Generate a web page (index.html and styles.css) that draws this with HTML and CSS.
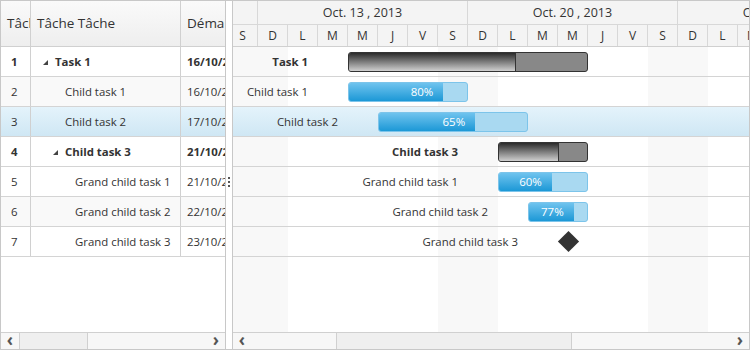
FILE: index.html
```html
<!DOCTYPE html>
<html>
  <head>
    <title>Gantt</title>
    <link rel="stylesheet" href="styles.css">
  </head>
  <body>
    <div class="gantt">
      <div class="grid">
        <div class="grid-head">
          <div class="cell c-id">Tâche ID</div>
          <div class="cell c-name">Tâche Tâche</div>
          <div class="cell c-start">Démarrer</div>
        </div>
        <div class="grid-body">
          <div class="grid-row parent">
            <div class="cell c-id">1</div>
            <div class="cell c-name lvl0"><span class="toggle"></span>Task 1</div>
            <div class="cell c-start">16/10/2013</div>
          </div>
          <div class="grid-row alt">
            <div class="cell c-id">2</div>
            <div class="cell c-name lvl1">Child task 1</div>
            <div class="cell c-start">16/10/2013</div>
          </div>
          <div class="grid-row selected">
            <div class="cell c-id">3</div>
            <div class="cell c-name lvl1">Child task 2</div>
            <div class="cell c-start">17/10/2013</div>
          </div>
          <div class="grid-row parent">
            <div class="cell c-id">4</div>
            <div class="cell c-name lvl1"><span class="toggle"></span>Child task 3</div>
            <div class="cell c-start">21/10/2013</div>
          </div>
          <div class="grid-row">
            <div class="cell c-id">5</div>
            <div class="cell c-name lvl2">Grand child task 1</div>
            <div class="cell c-start">21/10/2013</div>
          </div>
          <div class="grid-row alt">
            <div class="cell c-id">6</div>
            <div class="cell c-name lvl2">Grand child task 2</div>
            <div class="cell c-start">22/10/2013</div>
          </div>
          <div class="grid-row">
            <div class="cell c-id">7</div>
            <div class="cell c-name lvl2">Grand child task 3</div>
            <div class="cell c-start">23/10/2013</div>
          </div>
        </div>
        <div class="hscroll">
          <span class="arrow">&lsaquo;</span>
          <span class="thumb left-thumb"></span>
          <span class="track"></span>
          <span class="arrow">&rsaquo;</span>
        </div>
      </div>

      <div class="splitter">
        <div class="grip"><i></i><i></i><i></i></div>
      </div>

      <div class="chart">
        <div class="chart-head">
          <div class="months">
            <div class="month first"></div>
            <div class="month">Oct. 13 , 2013</div>
            <div class="month">Oct. 20 , 2013</div>
            <div class="month">Oct. 27 , 2013</div>
          </div>
          <div class="days">
            <div class="day">S</div>
            <div class="day">D</div>
            <div class="day">L</div>
            <div class="day">M</div>
            <div class="day">M</div>
            <div class="day">J</div>
            <div class="day">V</div>
            <div class="day">S</div>
            <div class="day">D</div>
            <div class="day">L</div>
            <div class="day">M</div>
            <div class="day">M</div>
            <div class="day">J</div>
            <div class="day">V</div>
            <div class="day">S</div>
            <div class="day">D</div>
            <div class="day">L</div>
            <div class="day">M</div>
          </div>
        </div>
        <div class="chart-body">
          <div class="chart-row">
            <span class="bar-label bold" style="width: 75px">Task 1</span>
            <div class="bar summary" style="width: 240px"><div class="progress" style="width: 70%"></div></div>
          </div>
          <div class="chart-row">
            <span class="bar-label" style="width: 75px">Child task 1</span>
            <div class="bar task" style="width: 120px"><div class="progress" style="width: 80%">80%</div></div>
          </div>
          <div class="chart-row selected">
            <span class="bar-label" style="width: 105px">Child task 2</span>
            <div class="bar task" style="width: 150px"><div class="progress" style="width: 65%">65%</div></div>
          </div>
          <div class="chart-row">
            <span class="bar-label bold" style="width: 225px">Child task 3</span>
            <div class="bar summary" style="width: 90px"><div class="progress" style="width: 68%"></div></div>
          </div>
          <div class="chart-row">
            <span class="bar-label" style="width: 225px">Grand child task 1</span>
            <div class="bar task" style="width: 90px"><div class="progress" style="width: 60%">60%</div></div>
          </div>
          <div class="chart-row">
            <span class="bar-label" style="width: 255px">Grand child task 2</span>
            <div class="bar task" style="width: 60px"><div class="progress" style="width: 77%">77%</div></div>
          </div>
          <div class="chart-row">
            <span class="bar-label" style="width: 285px">Grand child task 3</span>
            <div class="milestone"></div>
          </div>
        </div>
        <div class="hscroll">
          <span class="arrow">&lsaquo;</span>
          <span class="track right-pad"></span>
          <span class="thumb right-thumb"></span>
          <span class="track"></span>
          <span class="arrow">&rsaquo;</span>
        </div>
      </div>
    </div>
  </body>
</html>
```

FILE: styles.css
```css
* {
  box-sizing: border-box;
}

body {
  margin: 0;
  font-family: "Open Sans", "Noto Sans", sans-serif;
  color: #333333;
}

.gantt {
  width: 750px;
  height: 350px;
  border: 1px solid #c8c8c8;
  display: flex;
  overflow: hidden;
  background: #ffffff;
}

/* left grid */
.grid {
  width: 225px;
  flex-shrink: 0;
  border-right: 1px solid #c8c8c8;
  display: flex;
  flex-direction: column;
}

.grid-head {
  height: 46px;
  display: flex;
  border-bottom: 1px solid #d0d0d0;
  background: linear-gradient(#fafafa, #eeeeee);
  font-size: 13.5px;
}

.grid-head .cell {
  line-height: 45px;
  padding-left: 6px;
}

.cell {
  border-right: 1px solid #d0d0d0;
  white-space: nowrap;
  overflow: hidden;
  flex-shrink: 0;
}

.c-id {
  width: 30px;
}

.c-name {
  width: 150px;
}

.c-start {
  width: 44px;
  border-right: none;
}

.grid-body {
  flex: 1;
}

.grid-row {
  height: 30px;
  display: flex;
  border-bottom: 1px solid #d4d4d4;
  font-size: 11.4px;
}

.grid-row .cell {
  line-height: 30px;
}

.grid-row .c-id {
  padding-left: 10px;
}

.grid-row .c-start {
  padding-left: 6px;
}

.grid-row.alt {
  background: #f9f9f9;
}

.grid-row.parent {
  font-weight: bold;
}

.lvl0 {
  padding-left: 24px;
}

.lvl1 {
  padding-left: 34px;
}

.lvl2 {
  padding-left: 44px;
}

.toggle {
  display: inline-block;
  width: 0;
  height: 0;
  border-left: 5px solid transparent;
  border-bottom: 5px solid #444444;
  margin-left: -12px;
  margin-right: 7px;
  vertical-align: 1px;
}

.selected {
  background: linear-gradient(#e4f3fb, #cfe7f4);
}

/* scroll bars */
.hscroll {
  height: 17px;
  border-top: 1px solid #d0d0d0;
  background: #f7f7f7;
  display: flex;
  align-items: stretch;
  flex-shrink: 0;
}

.arrow {
  width: 18px;
  text-align: center;
  font-size: 17px;
  line-height: 14px;
  color: #555555;
  font-weight: bold;
  flex-shrink: 0;
}

.thumb {
  background: #efefef;
  border-left: 1px solid #d0d0d0;
  border-right: 1px solid #d0d0d0;
}

.left-thumb {
  width: 69px;
}

.track {
  flex: 1;
}

.right-pad {
  flex: none;
  width: 85px;
}

.right-thumb {
  width: 236px;
}

/* splitter */
.splitter {
  width: 7px;
  flex-shrink: 0;
  border-right: 1px solid #c8c8c8;
  display: flex;
  flex-direction: column;
  align-items: center;
}

.grip {
  margin-top: 176px;
  margin-right: 1px;
  display: flex;
  flex-direction: column;
  gap: 2px;
}

.grip i {
  display: block;
  width: 2px;
  height: 2px;
  background: #555555;
}

/* chart */
.chart {
  flex: 1;
  display: flex;
  flex-direction: column;
  overflow: hidden;
}

.chart-head {
  height: 46px;
  flex-shrink: 0;
  background: #f4f4f4;
  border-bottom: 1px solid #d0d0d0;
  overflow: hidden;
}

.months,
.days {
  display: flex;
  margin-left: -5px;
}

.months {
  height: 24px;
  border-bottom: 1px solid #d8d8d8;
}

.month {
  width: 210px;
  flex-shrink: 0;
  border-right: 1px solid #d8d8d8;
  text-align: center;
  font-size: 12.5px;
  line-height: 23px;
}

.month.first {
  width: 30px;
}

.day {
  width: 30px;
  flex-shrink: 0;
  border-right: 1px solid #d8d8d8;
  text-align: center;
  font-size: 12px;
  line-height: 21px;
}

.chart-body {
  flex: 1;
  background-image: linear-gradient(to right, #f8f8f8 0, #f8f8f8 60px, #ffffff 60px, #ffffff 210px);
  background-size: 210px 100%;
  background-position: -5px 0;
}

.chart-row {
  height: 30px;
  display: flex;
  align-items: center;
  border-bottom: 1px solid #d4d4d4;
  font-size: 11.4px;
}

.bar-label {
  flex-shrink: 0;
  text-align: right;
  margin-right: 40px;
  white-space: nowrap;
}

.bold {
  font-weight: bold;
}

.bar {
  height: 20px;
  border-radius: 3px;
  overflow: hidden;
  display: flex;
  flex-shrink: 0;
}

.bar.summary {
  background: #888888;
  border: 1px solid #333333;
}

.bar.summary .progress {
  background: linear-gradient(#2b2b2b, #d0d0d0);
  border-right: 1px solid #333333;
}

.bar.task {
  background: #a9d9f1;
  border: 1px solid #7cc4ea;
}

.bar.task .progress {
  background: linear-gradient(#6fc3ee, #1c98d6);
  color: #ffffff;
  text-align: right;
  padding-right: 10px;
  font-size: 11.5px;
  line-height: 18px;
}

.milestone {
  width: 15px;
  height: 15px;
  margin-left: 3px;
  background: #333333;
  transform: rotate(45deg);
}
```
